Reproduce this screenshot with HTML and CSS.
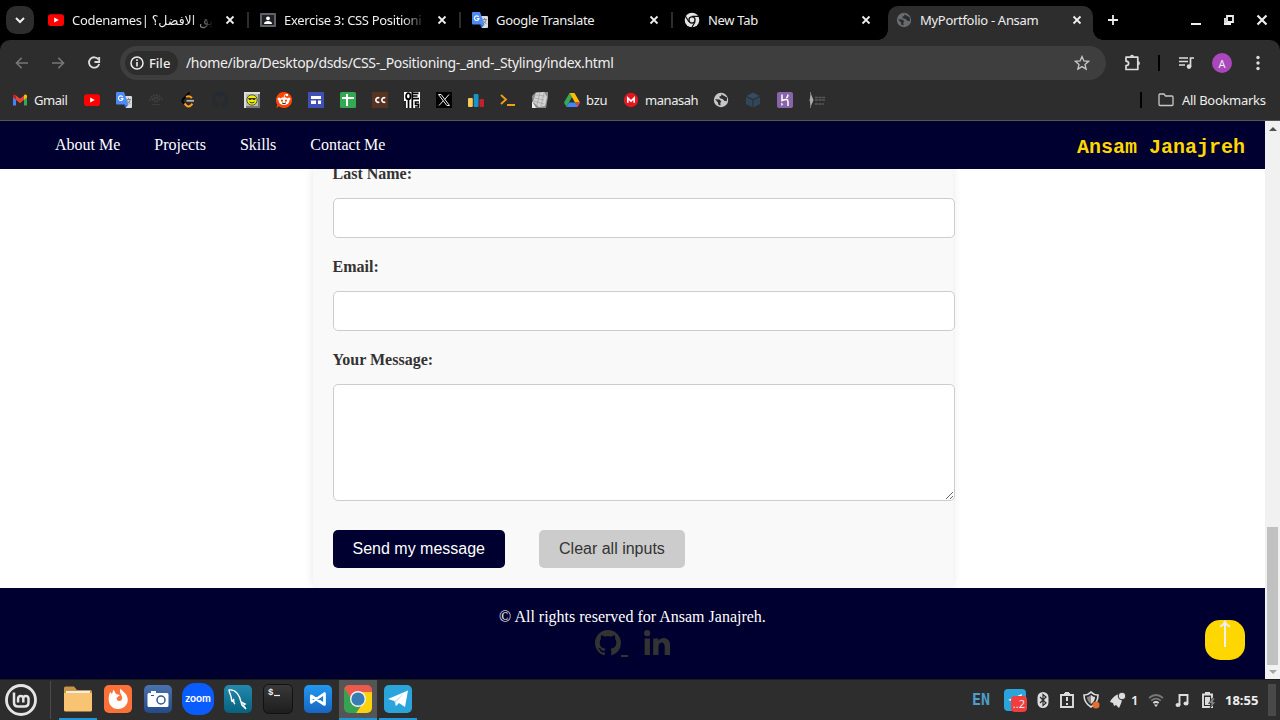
FILE: index.html
```html
<!DOCTYPE html>
<html lang="en">
<head>
<meta charset="utf-8">
<title>MyPortfolio - Ansam</title>
<link rel="stylesheet" href="styles.css">
</head>
<body>
<svg class="defs" width="0" height="0" aria-hidden="true">
  <symbol id="close" viewBox="0 0 10 10"><path d="M1.500 1.500l7 7M8.500 1.500l-7 7" stroke="#eee" stroke-width="1.800" fill="none"/></symbol>
  <symbol id="youtube" viewBox="0 0 16 16"><rect y="2.300" width="16" height="11.700" rx="2.800" fill="#f00"/><path d="M6.200 5.400v5.200L10.800 8z" fill="#fff"/></symbol>
  <symbol id="translate" viewBox="0 0 16 16"><path d="M7 4h8q1 0 1 1v10q0 1-1 1h-5z" fill="#dadce0"/><path d="M1 0h7l4.500 12.500H1q-1 0-1-1V1q0-1 1-1z" fill="#4c8bf5"/><path d="M8 12.500h4.500L9.500 16z" fill="#3367d6"/><path d="M6.700 5A2.300 2.300 0 1 0 7 6.600H4.800" stroke="#fff" stroke-width="1.100" fill="none"/><path d="M10.500 7.500h4.500M12.500 6v1.500M14.200 7.500c-.3 2-1.500 3.500-3 4.300M11.500 8.500c.5 1.500 1.700 2.600 3 3.300" stroke="#788087" stroke-width=".9" fill="none"/></symbol>
  <symbol id="globe" viewBox="0 0 16 16"><circle cx="8" cy="8" r="7.200" fill="currentColor"/><path d="M2 7.200l4.500.3 1.800 2-1 1.300.3 2.700-2-.6-.8-2.700zM8.200 2.200L14 5.500l-.2 3.800-2.600-.5-1.500-1.800-2.800-.7-.6-1.700 2-.5z" fill="#2d2d2d"/></symbol>
  <symbol id="github" viewBox="0 0 16 16"><path fill="currentColor" d="M8 0C3.580 0 0 3.580 0 8c0 3.540 2.290 6.530 5.470 7.590.4.070.55-.17.55-.38 0-.19-.01-.82-.01-1.490-2.010.37-2.530-.49-2.690-.94-.09-.23-.48-.94-.82-1.130-.28-.15-.68-.52-.01-.53.63-.01 1.080.58 1.230.82.72 1.210 1.870.87 2.330.66.07-.52.28-.87.51-1.070-1.780-.2-3.640-.89-3.640-3.950 0-.87.31-1.590.82-2.150-.08-.2-.36-1.020.08-2.120 0 0 .67-.21 2.200.82.64-.18 1.320-.27 2-.27s1.360.09 2 .27c1.530-1.040 2.200-.82 2.200-.82.44 1.100.16 1.920.08 2.120.51.56.82 1.270.82 2.150 0 3.070-1.870 3.750-3.650 3.950.29.25.54.73.54 1.480 0 1.070-.01 1.930-.01 2.200 0 .21.15.46.55.38A8.010 8.010 0 0 0 16 8c0-4.420-3.580-8-8-8z"/></symbol>
</svg>

<header class="browser">
  <div class="tabstrip">
    <button class="tab-menu"><svg width="10" height="10" viewBox="0 0 10 10"><path d="M1 3l4 4 4-4" fill="none" stroke="#eee" stroke-width="2"/></svg></button>
    <div class="tab"><svg class="ico"><use href="#youtube"/></svg><span class="title fade">Codenames| <bdi class="arabic" dir="rtl">يق الافضل؟</bdi></span><svg class="x"><use href="#close"/></svg></div>
    <div class="tab"><svg class="ico" viewBox="0 0 16 16"><rect width="16" height="14" y="1" rx="1" fill="#5f6368"/><rect x="2" y="3" width="12" height="10" fill="#202124"/><circle cx="8" cy="6.300" r="1.900" fill="#fff"/><path d="M4 12c0-2.200 2-3 4-3s4 .8 4 3z" fill="#fff"/></svg><span class="title fade exercise">Exercise 3: CSS Positioni</span><svg class="x"><use href="#close"/></svg></div>
    <div class="tab"><svg class="ico"><use href="#translate"/></svg><span class="title">Google Translate</span><svg class="x"><use href="#close"/></svg></div>
    <div class="tab last"><svg class="ico" viewBox="0 0 16 16"><circle cx="8" cy="8" r="7.300" fill="#e5e5e5"/><circle cx="8" cy="8" r="3.700" fill="#111"/><circle cx="8" cy="8" r="2.400" fill="#e5e5e5"/><path d="M8 4.400h7M4.900 9.800L1.300 4M11 10l-3.500 6" stroke="#111" stroke-width="1.200"/></svg><span class="title">New Tab</span><svg class="x"><use href="#close"/></svg></div>
    <div class="tab active"><svg class="ico dim"><use href="#globe"/></svg><span class="title">MyPortfolio - Ansam</span><svg class="x"><use href="#close"/></svg></div>
    <svg class="plus" width="12" height="12" viewBox="0 0 12 12"><path d="M6 1v10M1 6h10" stroke="#eee" stroke-width="1.800"/></svg>
    <div class="window-controls">
      <svg width="12" height="12" viewBox="0 0 12 12"><path d="M1 10h10" stroke="#eee" stroke-width="2"/></svg>
      <svg width="12" height="12" viewBox="0 0 12 12"><path d="M4 2h6v6H4zM2 4v7M1 10h7" fill="none" stroke="#eee" stroke-width="1.800"/></svg>
      <svg width="12" height="12" viewBox="0 0 12 12"><path d="M1.500 1.500l9 9M10.500 1.500l-9 9" stroke="#eee" stroke-width="2.200"/></svg>
    </div>
  </div>

  <div class="toolbar">
    <svg class="nav-ico" viewBox="0 0 16 16"><path d="M14 8H3M7.700 2.800L2.500 8l5.200 5.200" fill="none" stroke="#777" stroke-width="1.600"/></svg>
    <svg class="nav-ico" viewBox="0 0 16 16"><path d="M2 8h11M8.300 2.800L13.500 8l-5.200 5.200" fill="none" stroke="#777" stroke-width="1.600"/></svg>
    <svg class="nav-ico" viewBox="0 0 16 16"><path d="M12.500 4.500A5.200 5.200 0 1 0 13.200 9" fill="none" stroke="#ddd" stroke-width="1.800"/><path d="M13.200 2v5H8.500" fill="none" stroke="#ddd" stroke-width="1.800"/></svg>
    <div class="omnibox">
      <span class="chip"><svg width="14" height="14" viewBox="0 0 14 14"><circle cx="7" cy="7" r="6" fill="none" stroke="#eee" stroke-width="1.500"/><path d="M7 6v4.500M7 3.300v1.600" stroke="#eee" stroke-width="1.600"/></svg><b>File</b></span>
      <span class="url">/home/ibra/Desktop/dsds/CSS-_Positioning-_and-_Styling/index.html</span>
      <svg class="star" width="16" height="16" viewBox="0 0 16 16"><path d="M8 1.500l1.900 4.400 4.700.4-3.600 3.100 1.100 4.700L8 11.600l-4.100 2.500L5 9.400 1.400 6.300l4.700-.4z" fill="none" stroke="#c8c8c8" stroke-width="1.300"/></svg>
    </div>
    <div class="tools">
      <svg width="18" height="18" viewBox="0 0 18 18"><path d="M2 3.200h11.800V15.500H2v-3.800c3.500-.3 3.500-4.200 0-4.500z" fill="none" stroke="#ddd" stroke-width="1.700" stroke-linejoin="round"/><path d="M6 2.700a2 2 0 0 1 4 0M14.200 7a2.200 2.200 0 0 1 0 4.300z" fill="#ddd"/></svg>
      <i class="bar"></i>
      <svg class="media" width="18" height="16" viewBox="0 0 18 16"><path d="M1 3h9M1 6.500h9M1 10h6" stroke="#ddd" stroke-width="1.600"/><path d="M12.500 12V3H16" stroke="#ddd" stroke-width="1.700" fill="none"/><circle cx="11" cy="11.600" r="2.300" fill="#ddd"/></svg>
      <span class="avatar">A</span>
      <svg class="dots" width="4" height="16" viewBox="0 0 4 16"><circle cx="2" cy="2.500" r="1.700" fill="#ddd"/><circle cx="2" cy="8" r="1.700" fill="#ddd"/><circle cx="2" cy="13.500" r="1.700" fill="#ddd"/></svg>
    </div>
  </div>

  <nav class="bookmarks">
    <span class="bm gmail"><svg class="ico" viewBox="0 0 16 16"><path d="M1 3v10.500h3V7z" fill="#4285f4"/><path d="M15 3v10.500h-3V7z" fill="#34a853"/><path d="M3 2.700l5 4 5-4v4.300L8 11.200 3 7z" fill="#ea4335"/><path d="M1 5.500V4Q1 2 3 2.500l1 .8v4.500L1 5.500z" fill="#c5221f"/><path d="M15 5.500V4Q15 2 13 2.500l-1 .8v4.500z" fill="#fbbc04"/></svg>Gmail</span>
    <svg class="ico"><use href="#youtube"/></svg>
    <svg class="ico"><use href="#translate"/></svg>
    <svg class="ico" viewBox="0 0 16 16"><path d="M2 9a6 6 0 1 1 12 0M4.500 8.500c0-5 7-5 7 0" fill="none" stroke="#434343" stroke-width="1.300" stroke-dasharray="2 1"/><circle cx="8" cy="8" r="2" fill="none" stroke="#434343"/><path d="M4 12.500h8" stroke="#3c3c3c"/></svg>
    <svg class="ico" viewBox="0 0 16 16"><path d="M9.500.5L3 7.200Q1.500 8.800 3 10.300l2.500 2.500" fill="none" stroke="#050505" stroke-width="2"/><path d="M6 5q3-1.800 6 1M4.500 11.500l1.800 2q2.200 2.200 4.700-.2l1.500-1.500" fill="none" stroke="#ffa116" stroke-width="2"/><path d="M6.500 8.800H14" stroke="#b3b3b3" stroke-width="1.800"/></svg>
    <svg class="ico gh-dark"><use href="#github"/></svg>
    <svg class="ico" viewBox="0 0 16 16"><path fill="#ddd" d="M0 0h16v16H0z"/><path fill="#777" d="M2 2h14v14H2z"/><path fill="#bbb" d="M2 2h12v12H2z"/><circle cx="8" cy="8" r="5.200" fill="#ee0" stroke="#333" stroke-width=".8"/><path d="M4 6h8l-1 2H9.200L8 7 6.800 8H5z" fill="#333"/><path d="M5.500 10q2.500 2 5 0" fill="none" stroke="#333"/></svg>
    <svg class="ico" viewBox="0 0 16 16"><path d="M8 0a8 8 0 1 1-5 14.200L.3 16l1-3.500A8 8 0 0 1 8 0z" fill="#ff4500"/><ellipse cx="8" cy="9.200" rx="5.200" ry="3.900" fill="#fff"/><circle cx="3" cy="7" r="1.500" fill="#fff"/><circle cx="13" cy="7" r="1.500" fill="#fff"/><circle cx="11" cy="3" r="1.200" fill="#fff"/><path d="M8 5.500l1-3 2 .5" stroke="#fff" fill="none" stroke-width=".8"/><circle cx="6" cy="8.700" r="1.100" fill="#ff4500"/><circle cx="10" cy="8.700" r="1.100" fill="#ff4500"/><path d="M6 11q2 1 4 0" stroke="#222" fill="none"/></svg>
    <svg class="ico" viewBox="0 0 16 16"><path fill="#3f51b5" d="M0 0h16v16H0z"/><path fill="#fff" d="M3 4h10v3H3zM3 8.500h5V12H3zM10 8.500h3V12h-3z"/></svg>
    <svg class="ico" viewBox="0 0 16 16"><rect width="16" height="16" rx="1.500" fill="#34a853"/><path d="M2 6h12M7 2v12" stroke="#fff" stroke-width="2"/></svg>
    <svg class="ico" viewBox="0 0 16 16"><path fill="#563421" d="M0 0h16v16H0z"/><path d="M7.300 6A2.300 2.300 0 1 0 7.300 10M13.300 6A2.300 2.300 0 1 0 13.300 10" fill="none" stroke="#fff" stroke-width="1.700"/></svg>
    <svg class="ico" viewBox="0 0 16 16"><path fill="#fff" d="M0 0h16v16H0z"/><ellipse cx="4.300" cy="4.200" rx="2.200" ry="3" fill="none" stroke="#000" stroke-width="1.800"/><path d="M4.500 7v9M1 9v7M8.300 0v16M9 1.300h5.500M9 4h4.500M9 6.700h6M15 10h-3.500v2.300h3V15H11" fill="none" stroke="#000" stroke-width="1.700"/></svg>
    <svg class="ico" viewBox="0 0 16 16"><path d="M0 0h16v16H0z"/><path d="M2.500 2.500h2.600l8.400 11h-2.600zM13 2.500l-4.300 5M7.300 8.800L3 13.500" fill="none" stroke="#eee"/></svg>
    <svg class="ico" viewBox="0 0 16 16"><rect y="6" width="4.800" height="9" rx="1" fill="#f8c954"/><rect x="5.700" y="2" width="4.800" height="13" rx="1" fill="#1794c9"/><rect x="11.400" y="7" width="4.600" height="8" rx="1" fill="#c41f2b"/></svg>
    <svg class="ico" viewBox="0 0 16 16"><path d="M1 3l5 4.500L1 12M7 13h8" fill="none" stroke="#f0a010" stroke-width="1.800"/></svg>
    <svg class="ico" viewBox="0 0 16 16"><path d="M0 4l4-4h12v5l-2 11H1z" fill="#8c8c8c"/><path d="M4 1l8-1 3 5-2 9-6 1-6-5z" fill="#d2d2d2"/><path d="M4 3l9 1M3 6l9 2M2 9l10 3M8 0L5 13M12 1L9 14" stroke="#a5a5a5" stroke-width=".8"/><path d="M0 9l4 7H0z" fill="#eee"/></svg>
    <span class="bm bzu"><svg class="ico" viewBox="0 0 16 16"><path d="M5.500 1L0 10.500 2.500 15 8 5z" fill="#34a853"/><path d="M5.500 1h5L16 10.500h-5z" fill="#fbbc04"/><path d="M2.500 15h11L16 10.500H5z" fill="#4285f4"/><path d="M13.500 15l2.500-4.500h-5z" fill="#ea4335"/></svg>bzu</span>
    <span class="bm manasah"><svg class="ico" viewBox="0 0 16 16"><circle cx="8" cy="8" r="7.200" fill="#e51620"/><path d="M4.800 10.800V6L8 9l3.200-3v4.800" fill="none" stroke="#fff" stroke-width="1.700"/></svg>manasah</span>
    <svg class="ico light"><use href="#globe"/></svg>
    <svg class="ico" viewBox="0 0 16 16"><path d="M8 .5L14.500 4 8 7 1.500 4z" fill="#354b62"/><path d="M1 5l6.500 3v7.500L1 12zM15 5L8.500 8v7.500L15 12z" fill="#30465b"/></svg>
    <svg class="ico" viewBox="0 0 16 16"><rect width="16" height="16" rx="2" fill="#8864aa"/><path d="M5 2.500v6q6-2.500 6 1V14M11 2.500q0 2-1.500 3.500" fill="none" stroke="#fff" stroke-width="1.500"/><path d="M4.300 10.500V14l2-1.700z" fill="#fff"/></svg>
    <svg class="ico" viewBox="0 0 16 16"><path d="M1.500 0v16" stroke="#777"/><path d="M2 2l2.500 6L2 14 .5 8z" fill="#aaa"/><path d="M6 5.500h10M6 8h10M6 12h9" stroke="#595959" stroke-width="1.600" stroke-dasharray="3 .6"/></svg>
    <i class="bar push"></i>
    <span class="all"><svg width="16" height="14" viewBox="0 0 16 14"><path d="M1 2q0-1 1-1h4l1.500 2H14q1 0 1 1v7.500q0 1-1 1H2q-1 0-1-1z" fill="none" stroke="#c8c8c8" stroke-width="1.300"/></svg>All Bookmarks</span>
  </nav>
</header>

<div class="viewport">
  <div class="page">
    <nav class="site-nav">
      <a>About Me</a><a>Projects</a><a>Skills</a><a>Contact Me</a>
      <span class="brand">Ansam Janajreh</span>
    </nav>
    <main class="content">
      <form class="contact">
        <label>Last Name:</label><input type="text">
        <label>Email:</label><input type="text">
        <label>Your Message:</label><textarea></textarea>
        <div class="actions"><button type="button" class="send">Send my message</button><button type="button" class="clear">Clear all inputs</button></div>
      </form>
    </main>
    <footer class="footer">
      <p>© All rights reserved for Ansam Janajreh.</p>
      <div class="social"><svg class="gh" width="26" height="26"><use href="#github"/></svg><i class="underscore"></i><svg width="26" height="26" viewBox="0 0 26 26"><circle cx="3.200" cy="3.200" r="3.100" fill="#333"/><path d="M.6 8.500h5.300V25H.6zM9.200 8.500h5.100v2.300C17.500 6 26 7.500 26 14.500V25h-5.300v-8.500c0-5.500-6.200-5-6.200 0V25H9.200z" fill="#333"/></svg></div>
      <a class="to-top"><svg width="12" height="27" viewBox="0 0 12 27"><path d="M6 27V2M1 6.500q4-1.200 5-5.500 1 4.300 5 5.500" fill="none" stroke="#eee" stroke-width="2"/></svg></a>
    </footer>
  </div>
  <div class="scrollbar"><i class="arrow up"></i><i class="thumb"></i><i class="arrow down"></i></div>
</div>

<footer class="taskbar">
  <span class="mint"><svg width="32" height="32" viewBox="0 0 32 32"><circle cx="16" cy="16" r="14.500" fill="none" stroke="#e5e5e5" stroke-width="2.800"/><path d="M9 8.500v10q0 4 4 4h6.500q4 0 4-4v-4a2.600 2.600 0 0 0-5.200 0v4M18.300 18.500v-4a2.600 2.600 0 0 0-5.200 0v4" fill="none" stroke="#e5e5e5" stroke-width="2.500"/></svg></span>
  <div class="apps">
    <span class="app open"><svg viewBox="0 0 28 28"><path d="M0 3q0-1.500 1.500-1.500H10L13 5h13.500Q28 5 28 6.500V12H0z" fill="#c99443"/><path d="M2 6h24v5H2z" fill="#eee"/><path d="M0 8h28v17q0 1.500-1.500 1.500h-25Q0 26.500 0 25z" fill="#f8c471"/></svg></span>
    <span class="app"><svg viewBox="0 0 28 28"><rect width="28" height="28" rx="5" fill="#fb7138"/><path d="M6 7l2 2 1.500-4.500 2.500 4.500 4 1-3.500 3 .5 2c2 2.500 6 .5 5-3C17.500 9 15 8 16.500 3.500c1.500 3 4.500 3.500 6 6.500 4 8-2 14-8.500 14S2 18 6 7z" fill="#fff"/></svg></span>
    <span class="app"><svg viewBox="0 0 28 28"><defs><linearGradient id="cam" x2="0" y2="1"><stop stop-color="#4b72ae"/><stop offset="1" stop-color="#244b87"/></linearGradient></defs><rect width="28" height="28" rx="5" fill="url(#cam)"/><path d="M7 6h5v2H7zM5 8h18q1.500 0 1.500 1.500v11Q24.500 22 23 22H5q-1.500 0-1.500-1.500v-11Q3.500 8 5 8z" fill="#fff"/><circle cx="17" cy="15" r="4" fill="#fff" stroke="#315791" stroke-width="1.500"/><path d="M7 10.500h3" stroke="#315791"/></svg></span>
    <span class="app zoom"><b>zoom</b></span>
    <span class="app"><svg viewBox="0 0 28 28"><defs><linearGradient id="sea" x2="0" y2="1"><stop stop-color="#2389ae"/><stop offset="1" stop-color="#07627f"/></linearGradient></defs><rect width="28" height="28" rx="5" fill="url(#sea)"/><path d="M11 19c-2-1-1-3-1.500-5C9 16 8 18 7.500 15 8 11 5 8 5 5c7-1 11 6 12 12l4 2-2 1 3 4M17 17l1 3 4 4" fill="none" stroke="#fff" stroke-width="1.400"/></svg></span>
    <span class="app"><svg viewBox="0 0 28 28"><defs><linearGradient id="term" x2="0" y2="1"><stop stop-color="#393939"/><stop offset="1" stop-color="#1d1d1d"/></linearGradient></defs><rect x="-.5" y="-.5" width="29" height="29" rx="5" fill="url(#term)" stroke="#111"/><text x="4" y="10" class="prompt">$</text><path d="M10 10.500h6" stroke="#eee" stroke-width="1.200"/></svg></span>
    <span class="app"><svg viewBox="0 0 28 28"><defs><linearGradient id="vs" x2="0" y2="1"><stop stop-color="#2298f1"/><stop offset="1" stop-color="#1766c1"/></linearGradient></defs><rect width="28" height="28" rx="5" fill="url(#vs)"/><path d="M7.300 11v6.500L20.500 8.500v11z" fill="none" stroke="#fff" stroke-width="2.700" stroke-linejoin="round"/></svg></span>
    <span class="app open active"><svg viewBox="0 0 28 28"><defs><clipPath id="cr"><rect width="28" height="28" rx="5"/></clipPath></defs><g clip-path="url(#cr)"><path fill="#eb5a4b" d="M0 0h28v14H0z"/><path fill="#35a352" d="M0 3l9 13 7 6-4 6H0z"/><path fill="#fbd20b" d="M15 7h13v21H12l9-13z"/></g><circle cx="14" cy="14" r="8" fill="#f2f2f2"/><circle cx="14" cy="14" r="6.600" fill="#397db7"/></svg></span>
    <span class="app open"><svg viewBox="0 0 28 28"><rect width="28" height="28" rx="5" fill="#2aa5dc"/><path d="M4 14L24 5.500 21 22l-6-4-3 3-1.500-5z" fill="#fff"/><path d="M10.500 16l10-8-8.500 9v4z" fill="#c5dfed"/></svg></span>
  </div>
  <div class="tray">
    <span class="lang">EN</span>
    <span class="notify"><svg width="22" height="22" viewBox="0 0 22 22"><rect width="22" height="22" rx="4" fill="#2aa5dc"/><path d="M4 11l14-6-2 9z" fill="#fff"/></svg><b>..2</b></span>
    <svg class="bt" width="12" height="16" viewBox="0 0 12 16"><rect x=".5" width="11" height="16" rx="5.500" fill="#ddd"/><path d="M3 5l6 6-3 2.500v-11L9 5l-6 6" fill="none" stroke="#2d2d2d" stroke-width="1.200"/></svg>
    <svg class="clip" width="14" height="16" viewBox="0 0 14 16"><path d="M1 3h12v12H1zM4 2h6" fill="none" stroke="#ddd" stroke-width="1.900"/><path d="M5 0h4v4H5z" fill="#ddd"/><path d="M7 5v4M7 11v2" stroke="#ddd" stroke-width="2"/></svg>
    <svg class="shield" width="18" height="18" viewBox="0 0 18 18"><path d="M1 4q4 0 7-3 3 3 7 3 0 8-7 12-7-4-7-12z" fill="none" stroke="#ddd" stroke-width="1.600"/><path d="M8 4v9Q4 10 4 6q2 0 4-2z" fill="#888"/><path d="M8 4v9q4-3 4-7-2 0-4-2z" fill="#ddd"/><circle cx="13" cy="14" r="3.500" fill="#e26e30"/></svg>
    <svg class="bell" width="16" height="16" viewBox="0 0 16 16"><path d="M1 8q6-7 9-5 4 3 0 11l-1 2-3-3-2 1-1-3-3-1z" fill="#ddd"/><circle cx="12" cy="4" r="3.800" fill="#ddd" stroke="#2d2d2d"/></svg>
    <span class="count">1</span>
    <svg class="wifi" width="16" height="14" viewBox="0 0 16 14"><path d="M1 5q7-6 14 0M3.200 7.600q4.800-4 9.600 0" fill="none" stroke="#777" stroke-width="1.800"/><path d="M5.300 10q2.700-2 5.400 0" fill="none" stroke="#ddd" stroke-width="1.800"/><path d="M6 11.500h4L8 14z" fill="#ddd"/></svg>
    <svg class="music" width="14" height="14" viewBox="0 0 14 14"><path d="M4.500 12V2h8v8" fill="none" stroke="#ddd" stroke-width="1.900"/><ellipse cx="3" cy="12" rx="2.500" ry="2" fill="#ddd"/><ellipse cx="11" cy="10.500" rx="2.500" ry="2" fill="#ddd"/></svg>
    <svg class="battery" width="16" height="16" viewBox="0 0 16 16"><path d="M2 2.500h9V15H2zM4 1h5" fill="none" stroke="#ddd" stroke-width="1.900"/><path d="M4 5h5v8H4z" fill="#ddd"/><path d="M11.500 6l-4 5.500h3L9 16l6-6h-3l2-4z" fill="#888" stroke="#2d2d2d" stroke-width=".7"/></svg>
    <b class="clock">18:55</b>
    <i class="handle"></i>
  </div>
</footer>
</body>
</html>
```
FILE: styles.css
```css
* { box-sizing: border-box; }
body {
  margin: 0; width: 1280px; height: 720px; overflow: hidden;
  display: flex; flex-direction: column;
  font-family: "Noto Sans", "Open Sans", "DejaVu Sans", sans-serif; font-size: 13px; color: #eee;
  background: #000;
}
svg { display: block; flex: none; }
.defs { position: absolute; }
.ico { width: 16px; height: 16px; }
.bar { width: 2px; height: 16px; background: #000; }

.browser { height: 121px; background: #000; flex: none; }
.tabstrip { height: 40px; display: flex; align-items: center; }
.tab-menu { width: 28px; height: 28px; margin: 0 3px 0 6px; padding: 0; border: 0; border-radius: 10px; background: #2d2d2d; display: grid; place-items: center; }
.tab { width: 212px; height: 16px; padding: 0 14px 0 11px; display: flex; align-items: center; gap: 8px; border-right: 2px solid #2d2d2d; }
.tab .title { width: 145px; flex: none; overflow: hidden; white-space: nowrap; line-height: 20px; letter-spacing: -.3px; }
.tab .x { width: 10px; height: 10px; }
.fade { -webkit-mask-image: linear-gradient(90deg, #000 82%, transparent 98%); mask-image: linear-gradient(90deg, #000 82%, transparent 98%); }
.tab .exercise { letter-spacing: -.33px; }
.arabic { font-family: "DejaVu Sans", sans-serif; font-size: 12.5px; letter-spacing: 0; }
.tab.last { width: 215px; border: 0; }
.tab.active {
  position: relative; width: 205px; height: 34px; align-self: flex-end; padding: 0 8px 6px; background: #2d2d2d;
  border: 0; border-radius: 10px 10px 0 0;
}
.tab.active::before, .tab.active::after { content: ""; position: absolute; bottom: 0; width: 10px; height: 10px; }
.tab.active::before { left: -10px; background: radial-gradient(circle at 0 0, transparent 9.5px, #2d2d2d 10px); }
.tab.active::after { right: -10px; background: radial-gradient(circle at 100% 0, transparent 9.5px, #2d2d2d 10px); }
.tab.active .title { width: 144px; }
.dim { color: #686c70; }
.light { color: #c4c7c9; }
.plus { margin-left: 14px; }
.window-controls { margin-left: auto; margin-right: 12px; display: flex; gap: 21px; }

.toolbar { height: 44px; padding: 2px 20px 0 14px; display: flex; align-items: center; background: #2d2d2d; border-radius: 10px 10px 0 0; }
.nav-ico { width: 16px; height: 16px; margin-right: 20px; }
.omnibox { width: 986px; height: 34px; margin-left: -2px; padding: 0 16px 0 5px; border-radius: 17px; background: #3e3e3e; display: flex; align-items: center; }
.chip { width: 53px; height: 24px; padding-left: 5px; border-radius: 12px; background: #2d2d2d; display: flex; align-items: center; gap: 5px; }
.chip b { font-size: 13px; font-weight: 500; }
.url { margin: 0 0 1px 8px; font-size: 14px; letter-spacing: -.345px; white-space: nowrap; }
.star { margin-left: auto; }
.tools { flex: 1; padding-left: 18px; display: flex; align-items: center; }
.tools .bar { margin-left: 16px; }
.media { margin-left: 18px; }
.avatar { width: 20px; height: 20px; margin-left: 16px; border-radius: 50%; background: #ab47bc; font-size: 11px; display: grid; place-items: center; }
.dots { margin-left: auto; }

.bookmarks { height: 37px; padding: 0 15px 4px 12px; display: flex; align-items: center; gap: 16px; background: #2d2d2d; border-bottom: 1px solid #555; font-size: 13px; white-space: nowrap; }
.bm { display: flex; align-items: center; gap: 6px; letter-spacing: -.45px; }
.gmail { width: 56px; }
.bzu { width: 43px; letter-spacing: -.2px; }
.manasah { width: 74px; }
.gh-dark { color: #242b33; }
.push { margin-left: auto; }
.all { width: 107px; display: flex; align-items: center; gap: 8px; letter-spacing: -.3px; }

.viewport { height: 558px; display: flex; flex: none; }
.page { width: 1265px; display: flex; flex-direction: column; background: #fff; font-family: "Liberation Serif", "Times New Roman", serif; font-size: 16px; }
.site-nav { height: 48px; flex: none; padding: 0 20px 0 55px; display: flex; align-items: center; gap: 34px; background: #000030; color: #fff; }
.brand { margin: 4px 0 0 auto; font: bold 20px "Liberation Mono", monospace; color: gold; }
.content { height: 419px; overflow: hidden; }
.contact { width: 640px; height: 423px; margin: -4px auto 0; padding: 0 20px; background: #f9f9f9; border-radius: 8px; box-shadow: 0 0 10px rgba(0, 0, 0, .1); }
.contact label { display: block; height: 18px; margin-bottom: 15px; line-height: 18px; font-weight: bold; color: #333; }
.contact input, .contact textarea { display: block; width: 622px; height: 40px; margin: 0 0 20px; padding: 10px; border: 1px solid #ccc; border-radius: 5px; background: #fff; }
.contact textarea { height: 117px; margin-bottom: 29px; resize: vertical; }
.actions { display: flex; gap: 34px; }
.actions button { height: 38px; padding: 0 20px; border: 0; border-radius: 5px; font: 16px "Liberation Sans", Arial, sans-serif; }
.send { background: #000030; color: #fff; }
.clear { background: #ccc; color: #333; }
.footer { position: relative; height: 91px; padding-top: 20px; background: #000030; color: #fff; text-align: center; }
.footer p { margin: 0; line-height: 18px; }
.social { margin-top: 4px; display: flex; justify-content: center; }
.gh { color: #333; }
.underscore { width: 7px; height: 2px; margin: 25px 16px 0 0; background: #333; }
.to-top { position: absolute; right: 20px; bottom: 19px; width: 40px; height: 40px; background: gold; border-radius: 15px; display: flex; justify-content: center; }
.scrollbar { width: 15px; padding: 5px 2px 3px; background: #f1f1f1; display: flex; flex-direction: column; align-items: center; }
.thumb { width: 11px; height: 138px; margin: auto 0 5px; background: #c1c1c1; }
.arrow { border: 4px solid transparent; }
.up { border-top: 0; border-bottom-color: #505050; margin-top: 1px; }
.down { border-bottom: 0; border-top-color: #a3a3a3; margin-bottom: 2px; }

.taskbar { height: 41px; padding: 0 4px 0 5px; display: flex; align-items: center; background: #2d2d2d; border-top: 1px solid #1c1c1c; }
.mint { width: 46px; height: 38px; display: flex; align-items: center; border-right: 1px solid #4b4b4b; }
.apps { height: 40px; margin-left: 8px; display: flex; gap: 2px; }
.app { width: 38px; height: 40px; padding-top: 5px; display: flex; justify-content: center; }
.app svg { width: 28px; height: 28px; overflow: visible; }
.open { border-bottom: 2px solid #2196d6; }
.app.active { background: #555; }
.zoom { padding-top: 3px; }
.zoom b { width: 32px; height: 32px; flex: none; border-radius: 13px; background: #0b5cff; font: bold 10.5px/30px Lato, sans-serif; text-align: center; color: #fff; }
.prompt { font: bold 9px "Liberation Mono", monospace; fill: #eee; }
.tray { flex: 1; height: 40px; display: flex; align-items: center; justify-content: flex-end; }
.lang { width: 19px; margin-right: 13px; font: bold 15px "DejaVu Sans Mono", monospace; color: #4f9dc8; }
.notify { position: relative; width: 23px; margin-right: 10px; }
.notify b { position: absolute; left: 7px; top: 7px; width: 16px; height: 16px; border-radius: 4px; background: #f03d3d; font: 11px/16px "Noto Sans", sans-serif; text-align: right; padding-right: 2px; }
.bt { margin-right: 11px; }
.clip { margin-right: 9px; }
.shield { margin-right: 9px; }
.bell { margin-right: 5px; }
.count { width: 8px; margin-right: 9px; font-weight: 600; }
.wifi { margin-right: 11px; }
.music { margin-right: 12px; }
.battery { margin-right: 8px; }
.clock { width: 35px; margin-right: 8px; font-size: 13px; font-weight: 700; letter-spacing: 0; }
.handle { width: 8px; height: 32px; background: #494949; }
```
